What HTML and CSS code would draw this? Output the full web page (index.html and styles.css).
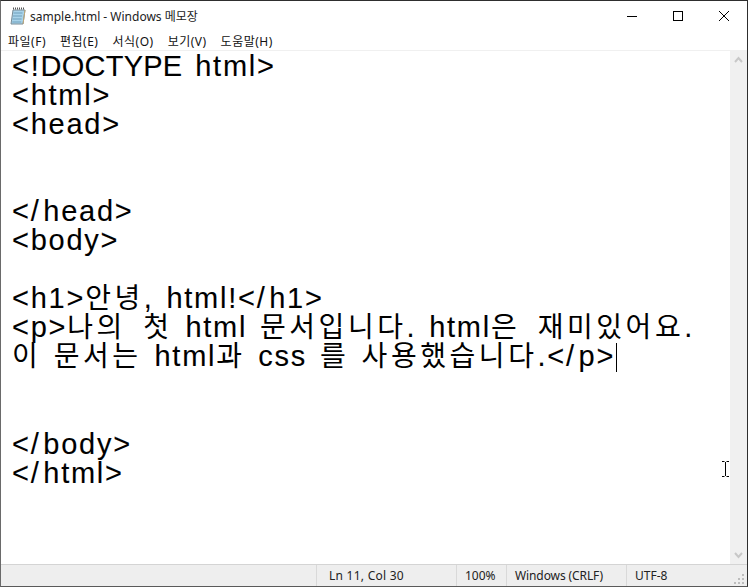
FILE: index.html
```html
<!DOCTYPE html>
<html lang="ko">
<head>
<meta charset="utf-8">
<title>sample.html - Windows 메모장</title>
<link rel="stylesheet" href="styles.css">
</head>
<body>
<div class="window">
  <header class="titlebar">
    <svg class="app-icon" width="16" height="18" viewBox="0 0 16 18">
      <path d="M3 3h12l-2 14H1z" fill="#a9d3ea" stroke="#7a8c96"/>
      <path d="M3.5 6h9M3 9h9M2.6 12h9M2.3 15h9" stroke="#6f9fbb" stroke-width="1"/>
      <path d="M3 1.500h12" stroke="#555" stroke-width="2" stroke-dasharray="1 1"/>
      <path d="M13 17l2-14" stroke="#c0a878"/>
    </svg>
    <span class="title">sample.html - Windows 메모장</span>
    <div class="controls">
      <svg class="ctl" width="46" height="30" viewBox="0 0 46 30"><path d="M18 15.500h10" stroke="#000"/></svg>
      <svg class="ctl" width="46" height="30" viewBox="0 0 46 30"><rect x="18.500" y="10.500" width="9" height="9" fill="none" stroke="#000"/></svg>
      <svg class="ctl" width="46" height="30" viewBox="0 0 46 30"><path d="M18 10l10 10M28 10l-10 10" stroke="#000" fill="none"/></svg>
    </div>
  </header>
  <nav class="menu">
    <span>파일(F)</span><span>편집(E)</span><span>서식(O)</span><span>보기(V)</span><span>도움말(H)</span>
  </nav>
  <main class="body">
    <div class="editor">
<pre class="code">&lt;!<span class="caps">DOCTYPE</span> html&gt;
&lt;html&gt;
&lt;head&gt;


&lt;<span class="sl">/</span>head&gt;
&lt;body&gt;

&lt;h1&gt;<span class="ko">안녕</span>, html!&lt;<span class="sl">/</span>h1&gt;
&lt;p&gt;<span class="ko ko-wide">나의 첫</span> html <span class="ko">문서입니다</span>. html<span class="ko ko-wide">은 재미있어요</span>.
<span class="ko">이 문서는</span> html<span class="ko">과</span> css <span class="ko">를 사용했습니다</span>.&lt;<span class="sl">/</span>p&gt;<span class="caret"></span>


&lt;<span class="sl">/</span>body&gt;
&lt;<span class="sl">/</span>html&gt;</pre>
      <svg class="ibeam" width="7" height="16" viewBox="0 0 7 16"><path d="M0 .5h2.500M4.500 .5h2.500M3.500 1v14M0 15.500h2.500M4.500 15.500h2.500" stroke="#000" fill="none"/></svg>
    </div>
    <aside class="scrollbar">
      <svg width="17" height="17" viewBox="0 0 17 17"><path d="M5 11l3.500-4 3.500 4" fill="none" stroke="#c8c8c8" stroke-width="2"/></svg>
      <svg width="17" height="17" viewBox="0 0 17 17"><path d="M5 6l3.500 4 3.500-4" fill="none" stroke="#c8c8c8" stroke-width="2"/></svg>
    </aside>
  </main>
  <footer class="status">
    <span class="cell pos">Ln 11, Col 30</span>
    <span class="cell zoom">100%</span>
    <span class="cell eol">Windows (CRLF)</span>
    <span class="cell enc">UTF-8</span>
    <svg class="grip" width="12" height="12" viewBox="0 0 12 12"><path d="M9 1h2v2H9zM5 5h2v2H5zM9 5h2v2H9zM1 9h2v2H1zM5 9h2v2H5zM9 9h2v2H9z" fill="#bdbdbd"/></svg>
  </footer>
</div>
</body>
</html>
```
FILE: styles.css
```css
* { box-sizing: border-box; }
html, body { margin: 0; padding: 0; background: #fff; }
.window {
  width: 748px;
  height: 587px;
  display: flex;
  flex-direction: column;
  border: 1px solid #6a6a6a;
  border-top-color: #2e2e2e;
  border-right-color: #2e2e2e;
  border-bottom-color: #5a5a5a;
  font-family: "Liberation Sans", "Noto Sans CJK KR", sans-serif;
  overflow: hidden;
}
.titlebar {
  height: 30px;
  flex: none;
  display: flex;
  align-items: center;
  padding-left: 9px;
  gap: 4px;
  font-family: "Noto Sans", "Noto Sans CJK KR", sans-serif;
  font-size: 12px;
  color: #222;
}
.title { flex: 1; }
.controls { display: flex; }
.ctl { display: block; }
.menu {
  height: 19px;
  flex: none;
  display: flex;
  align-items: center;
  gap: 14px;
  padding-left: 7px;
  font-family: "Noto Sans", "Noto Sans CJK KR", sans-serif;
  font-size: 12px;
  letter-spacing: 0.5px;
  color: #111;
}
.body {
  flex: 1;
  min-height: 0;
  display: flex;
  border-top: 1px solid #f0f0f0;
}
.editor { flex: 1; position: relative; overflow: hidden; }
.code {
  margin: 0;
  padding: 1px 0 0 11px;
  font-family: "Liberation Sans", sans-serif;
  font-size: 29px;
  line-height: 29px;
  letter-spacing: 1.75px;
  word-spacing: 3px;
  color: #000;
  white-space: pre;
  -webkit-text-stroke: 0.1px #000;
}
.caps { letter-spacing: 0.25px; }
.sl { letter-spacing: 4.5px; }
.ko {
  font-family: "Noto Sans CJK KR", sans-serif;
  font-size: 28px;
  line-height: 0;
  letter-spacing: 3.55px;
  word-spacing: 1px;
  -webkit-text-stroke: 0;
}
.ko-wide { word-spacing: 6px; }
.caret {
  display: inline-block;
  width: 1px;
  height: 29px;
  background: #000;
  vertical-align: -6px;
  margin-left: 1px;
}
.ibeam { position: absolute; top: 410px; right: 1px; }
.scrollbar {
  width: 17px;
  flex: none;
  background: #f0f0f0;
  display: flex;
  flex-direction: column;
  justify-content: space-between;
}
.scrollbar svg { display: block; }
.status {
  height: 22px;
  flex: none;
  display: flex;
  align-items: center;
  position: relative;
  background: #eeeeee;
  border-top: 1px solid #d4d4d4;
  font-family: "Noto Sans", sans-serif;
  font-size: 12px;
  color: #222;
  padding-left: 315px;
}
.cell {
  height: 100%;
  display: flex;
  align-items: center;
  border-left: 1px solid #d9d9d9;
  padding-left: 12px;
}
.pos { width: 140px; letter-spacing: 0.25px; }
.zoom { width: 50px; padding-left: 8px; }
.eol { width: 120px; padding-left: 8px; letter-spacing: -0.1px; }
.enc { padding-left: 8px; }
.grip { position: absolute; right: 2px; bottom: 1px; }
```
